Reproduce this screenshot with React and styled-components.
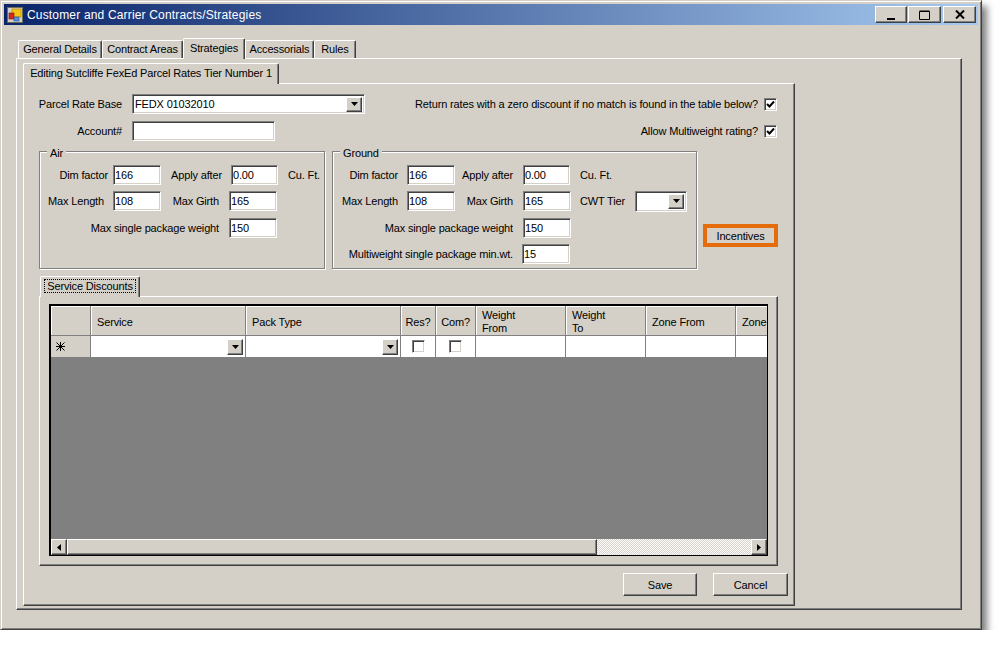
import styled, { createGlobalStyle } from 'styled-components';

const GlobalStyle = createGlobalStyle`
  html, body {
    margin: 0;
    background: #fff;
  }
  * {
    box-sizing: border-box;
  }
`;

const face = '#d4d0c8';
const columns = [40, 155, 155, 35, 40, 90, 80, 90, 90];

const Window = styled.div`
  display: flex;
  flex-direction: column;
  width: 982px;
  height: 630px;
  padding: 3px;
  background: ${face};
  border: 1px solid ${face};
  border-right-color: #404040;
  border-bottom-color: #404040;
  box-shadow: inset 1px 1px 0 #fff, inset -1px -1px 0 #808080, 5px 6px 7px rgba(0, 0, 0, 0.5);
  font-family: 'Liberation Sans', Arial, sans-serif;
  font-size: 11px;
  letter-spacing: -0.15px;
  color: #000;
`;

const TitleBar = styled.div`
  display: flex;
  align-items: center;
  flex: none;
  height: 21px;
  padding: 0 2px 0 3px;
  background: linear-gradient(90deg, #0a246a, #a6caf0);
`;

const TitleText = styled.span`
  margin-left: 4px;
  color: #fff;
  font-size: 12px;
  letter-spacing: 0.17px;
`;

const CaptionButtons = styled.div`
  display: flex;
  margin-left: auto;
`;

const CaptionButton = styled.button`
  display: flex;
  align-items: center;
  justify-content: center;
  width: ${(p) => p.$w}px;
  height: 17px;
  margin-left: ${(p) => p.$ml || 0}px;
  padding: 0;
  background: ${face};
  border: 1px solid;
  border-color: #fff #404040 #404040 #fff;
  box-shadow: inset -1px -1px 0 #808080;
`;

const TabStrip = styled.div`
  display: flex;
  align-items: flex-end;
  flex: none;
  height: ${(p) => p.$h}px;
  padding-left: ${(p) => p.$pl || 0}px;
`;

const Tab = styled.div`
  display: flex;
  align-items: center;
  justify-content: center;
  width: ${(p) => p.$w}px;
  height: ${(p) => (p.$active ? p.$h + 2 : p.$h)}px;
  margin-bottom: ${(p) => (p.$active ? -1 : 0)}px;
  padding-bottom: 2px;
  background: ${face};
  border: 1px solid;
  border-color: #fff #404040 transparent #fff;
  border-bottom: none;
  border-radius: 2px 2px 0 0;
  box-shadow: inset -1px 0 0 #808080;
  position: relative;
  z-index: ${(p) => (p.$active ? 1 : 0)};
`;

const FocusLabel = styled.span`
  padding: 1px 3px;
  outline: 1px dotted #000;
  outline-offset: -1px;
`;

const OuterPanel = styled.div`
  flex: none;
  width: 946px;
  height: 552px;
  padding: 4px 6px 0;
  border: 1px solid;
  border-color: #fff #404040 #404040 #fff;
  box-shadow: inset -1px -1px 0 #808080;
`;

const OuterArea = styled.div`
  margin: 13px 0 0 12px;
  display: flex;
  flex-direction: column;
`;

const InnerPanel = styled.div`
  width: 772px;
  height: 523px;
  padding-top: 10px;
  border: 1px solid;
  border-color: #fff #404040 #404040 #fff;
  box-shadow: inset -1px -1px 0 #808080;
`;

const Row = styled.div`
  display: flex;
  align-items: center;
  height: 20px;
  margin-top: ${(p) => p.$mt || 0}px;
`;

const Label = styled.span`
  flex: none;
  width: ${(p) => p.$w}px;
  margin-left: ${(p) => p.$ml || 0}px;
  text-align: ${(p) => p.$align || 'right'};
  white-space: nowrap;
`;

const Input = styled.input`
  flex: none;
  width: ${(p) => p.$w}px;
  height: 20px;
  margin: 0 0 0 ${(p) => p.$ml || 0}px;
  padding: 0 0 0 1px;
  background: #fff;
  border: 1px solid;
  border-color: #808080 #fff #fff #808080;
  box-shadow: inset 1px 1px 0 #404040, inset -1px -1px 0 ${face};
  border-radius: 0;
  outline: none;
  font: inherit;
  letter-spacing: inherit;
  color: #000;
`;

const Combo = styled.div`
  display: flex;
  align-items: center;
  flex: none;
  width: ${(p) => p.$w}px;
  height: ${(p) => p.$h || 20}px;
  margin-left: ${(p) => p.$ml || 0}px;
  padding: 2px 2px 2px 2px;
  background: #fff;
  border: 1px solid;
  border-color: #808080 #fff #fff #808080;
  box-shadow: inset 1px 1px 0 #404040, inset -1px -1px 0 ${face};
`;

const ComboText = styled.span`
  flex: 1;
`;

const DropButton = styled.div`
  display: flex;
  align-items: center;
  justify-content: center;
  flex: none;
  width: 16px;
  height: ${(p) => p.$h || 15}px;
  background: ${face};
  border: 1px solid;
  border-color: #fff #404040 #404040 #fff;
  box-shadow: inset -1px -1px 0 #808080;
`;

const CheckLabel = styled.span`
  margin-left: auto;
`;

const CheckBox = styled.span`
  display: flex;
  align-items: center;
  justify-content: center;
  flex: none;
  width: 13px;
  height: 13px;
  margin: ${(p) => p.$margin || '0'};
  background: #fff;
  border: 1px solid;
  border-color: #808080 #fff #fff #808080;
  box-shadow: inset 1px 1px 0 #404040, inset -1px -1px 0 ${face};
`;

const Groups = styled.div`
  display: flex;
  align-items: flex-start;
  margin: 10px 0 0 15px;
`;

const Group = styled.div`
  position: relative;
  width: ${(p) => p.$w}px;
  height: 118px;
  margin-right: ${(p) => p.$mr || 0}px;
  padding-top: 13px;
  border: 1px solid #808080;
  box-shadow: 1px 1px 0 #fff, inset 1px 1px 0 #fff;
`;

const Legend = styled.span`
  position: absolute;
  top: -5px;
  left: 7px;
  padding: 0 3px;
  background: ${face};
`;

const IncentivesButton = styled.button`
  flex: none;
  width: 75px;
  height: 23px;
  margin-top: 73px;
  padding: 0;
  background: ${face};
  border: 4px solid #e46c0a;
  font: inherit;
  letter-spacing: inherit;
  color: #000;
`;

const ServiceArea = styled.div`
  display: flex;
  flex-direction: column;
  margin: 8px 0 0 15px;
`;

const ServicePanel = styled.div`
  width: 739px;
  height: 270px;
  padding: 7px 0 0 9px;
  border: 1px solid;
  border-color: #fff #404040 #404040 #fff;
  box-shadow: inset -1px -1px 0 #808080;
`;

const DataGrid = styled.div`
  display: flex;
  flex-direction: column;
  width: 719px;
  height: 252px;
  background: #808080;
  border: 2px solid #000;
  border-right-width: 1px;
  border-bottom-width: 1px;
  overflow: hidden;
`;

const GridRow = styled.div`
  display: grid;
  grid-template-columns: ${columns.map((c) => `${c}px`).join(' ')};
  flex: none;
  width: 775px;
  height: ${(p) => p.$h}px;
`;

const HeaderCell = styled.div`
  display: flex;
  align-items: center;
  padding: 3px ${(p) => (p.$center ? 0 : 6)}px 0;
  justify-content: ${(p) => (p.$center ? 'center' : 'flex-start')};
  line-height: 13px;
  background: ${face};
  border-right: 1px solid #808080;
  border-bottom: 1px solid #808080;
  box-shadow: inset 1px 1px 0 #fff;
  white-space: pre-line;
`;

const BodyCell = styled.div`
  display: flex;
  align-items: center;
  justify-content: ${(p) => p.$justify || 'flex-end'};
  padding: 0 ${(p) => (p.$justify ? 0 : 2)}px 0 ${(p) => p.$pl || 0}px;
  background: ${(p) => (p.$head ? face : '#fff')};
  border-right: 1px solid #808080;
  border-bottom: 1px solid #808080;
`;

const GrayArea = styled.div`
  flex: 1;
`;

const ScrollBar = styled.div`
  display: flex;
  flex: none;
  height: 16px;
  background: repeating-conic-gradient(${face} 0 25%, #fff 0 50%) 0 0 / 2px 2px;
`;

const ScrollButton = styled.div`
  display: flex;
  align-items: center;
  justify-content: center;
  flex: none;
  width: 16px;
  background: ${face};
  border: 1px solid;
  border-color: #fff #404040 #404040 #fff;
  box-shadow: inset -1px -1px 0 #808080;
  margin-left: ${(p) => (p.$end ? 'auto' : 0)};
`;

const ScrollThumb = styled.div`
  flex: none;
  width: 530px;
  background: ${face};
  border: 1px solid;
  border-color: #fff #404040 #404040 #fff;
  box-shadow: inset -1px -1px 0 #808080;
`;

const Actions = styled.div`
  display: flex;
  justify-content: flex-end;
  gap: 16px;
  margin: 7px 6px 0 0;
`;

const ActionButton = styled.button`
  width: ${(p) => p.$w}px;
  height: 23px;
  padding: 0;
  background: ${face};
  border: 1px solid;
  border-color: #fff #404040 #404040 #fff;
  box-shadow: inset -1px -1px 0 #808080;
  font: inherit;
  letter-spacing: inherit;
  color: #000;
`;

const AppIcon = () => (
  <svg width="16" height="16" viewBox="0 0 16 16">
    <rect x="0.5" y="0.5" width="15" height="15" fill="#d4d0c8" stroke="#6b6b5a" />
    <rect x="5" y="2" width="9" height="8" fill="#f5c518" stroke="#a87a00" strokeWidth="0.6" />
    <rect x="2" y="6" width="5" height="6" fill="#d8281c" stroke="#7a1208" strokeWidth="0.6" />
    <rect x="7" y="10" width="5" height="4" fill="#5b8fe0" stroke="#24508f" strokeWidth="0.6" />
  </svg>
);

const Arrow = ({ dir = 'down' }) => {
  const points = {
    down: '0,0 7,0 3.5,4',
    left: '4,0 4,7 0,3.5',
    right: '0,0 0,7 4,3.5',
  };
  const size = dir === 'down' ? [7, 4] : [4, 7];
  return (
    <svg width={size[0]} height={size[1]} viewBox={`0 0 ${size[0]} ${size[1]}`}>
      <polygon points={points[dir]} fill="#000" />
    </svg>
  );
};

const Check = () => (
  <svg width="9" height="9" viewBox="0 0 9 9">
    <path d="M1 4 L3.5 6.5 L8 1.5" fill="none" stroke="#000" strokeWidth="2" />
  </svg>
);

const NewRowStar = () => (
  <svg width="11" height="11" viewBox="0 0 11 11">
    <path d="M5.5 1V10M1.5 1.5L9.5 9.5M9.5 1.5L1.5 9.5M1 5.5H10" stroke="#000" strokeWidth="1" fill="none" />
  </svg>
);

const headers = [
  ['', false],
  ['Service', false],
  ['Pack Type', false],
  ['Res?', true],
  ['Com?', true],
  ['Weight\nFrom', false],
  ['Weight\nTo', false],
  ['Zone From', false],
  ['Zone', false],
];

function App() {
  return (
    <>
      <GlobalStyle />
      <Window>
        <TitleBar>
          <AppIcon />
          <TitleText>Customer and Carrier Contracts/Strategies</TitleText>
          <CaptionButtons>
            <CaptionButton $w={32}>
              <svg width="8" height="10" viewBox="0 0 8 10"><rect y="8" width="8" height="2" fill="#000" /></svg>
            </CaptionButton>
            <CaptionButton $w={33} $ml={1}>
              <svg width="11" height="10" viewBox="0 0 11 10"><path d="M0.5 1.5H10.5V9.5H0.5Z M0.5 1H10.5" fill="none" stroke="#000" /></svg>
            </CaptionButton>
            <CaptionButton $w={33} $ml={2}>
              <svg width="10" height="9" viewBox="0 0 10 9"><path d="M1 0.5L9 8.5M9 0.5L1 8.5" stroke="#000" strokeWidth="2" /></svg>
            </CaptionButton>
          </CaptionButtons>
        </TitleBar>

        <OuterArea>
          <TabStrip $h={20} $pl={2}>
            <Tab $w={84} $h={18}>General Details</Tab>
            <Tab $w={81} $h={18}>Contract Areas</Tab>
            <Tab $w={62} $h={19} $active>Strategies</Tab>
            <Tab $w={69} $h={18}>Accessorials</Tab>
            <Tab $w={42} $h={18}>Rules</Tab>
          </TabStrip>
          <OuterPanel>
            <TabStrip $h={20}>
              <Tab $w={256} $h={19} $active>Editing Sutcliffe FexEd Parcel Rates Tier Number 1</Tab>
            </TabStrip>
            <InnerPanel>
              <Row>
                <Label $w={98}>Parcel Rate Base</Label>
                <Combo $w={233} $ml={10}>
                  <ComboText>FEDX 01032010</ComboText>
                  <DropButton><Arrow /></DropButton>
                </Combo>
                <CheckLabel>Return rates with a zero discount if no match is found in the table below?</CheckLabel>
                <CheckBox $margin="0 17px 0 6px"><Check /></CheckBox>
              </Row>
              <Row $mt={7}>
                <Label $w={98}>Account#</Label>
                <Input $w={143} $ml={10} readOnly />
                <CheckLabel>Allow Multiweight rating?</CheckLabel>
                <CheckBox $margin="0 17px 0 6px"><Check /></CheckBox>
              </Row>

              <Groups>
                <Group $w={286} $mr={7}>
                  <Legend>Air</Legend>
                  <Row>
                    <Label $w={68}>Dim factor</Label>
                    <Input $w={48} $ml={5} readOnly value="166" />
                    <Label $w={61}>Apply after</Label>
                    <Input $w={47} $ml={9} readOnly value="0.00" />
                    <Label $w={32} $ml={10}>Cu. Ft.</Label>
                  </Row>
                  <Row $mt={6}>
                    <Label $w={64}>Max Length</Label>
                    <Input $w={48} $ml={9} readOnly value="108" />
                    <Label $w={58}>Max Girth</Label>
                    <Input $w={48} $ml={10} readOnly value="165" />
                  </Row>
                  <Row $mt={7}>
                    <Label $w={179}>Max single package weight</Label>
                    <Input $w={48} $ml={10} readOnly value="150" />
                  </Row>
                </Group>

                <Group $w={365} $mr={6}>
                  <Legend>Ground</Legend>
                  <Row>
                    <Label $w={65}>Dim factor</Label>
                    <Input $w={48} $ml={9} readOnly value="166" />
                    <Label $w={58}>Apply after</Label>
                    <Input $w={47} $ml={10} readOnly value="0.00" />
                    <Label $w={32} $ml={10}>Cu. Ft.</Label>
                  </Row>
                  <Row $mt={6}>
                    <Label $w={65}>Max Length</Label>
                    <Input $w={48} $ml={9} readOnly value="108" />
                    <Label $w={58}>Max Girth</Label>
                    <Input $w={48} $ml={10} readOnly value="165" />
                    <Label $w={46} $ml={9} $align="left">CWT Tier</Label>
                    <Combo $w={52} $h={21} $ml={9}>
                      <ComboText />
                      <DropButton><Arrow /></DropButton>
                    </Combo>
                  </Row>
                  <Row $mt={7}>
                    <Label $w={180}>Max single package weight</Label>
                    <Input $w={48} $ml={10} readOnly value="150" />
                  </Row>
                  <Row $mt={6}>
                    <Label $w={180}>Multiweight single package min.wt.</Label>
                    <Input $w={48} $ml={9} readOnly value="15" />
                  </Row>
                </Group>

                <IncentivesButton>Incentives</IncentivesButton>
              </Groups>

              <ServiceArea>
                <TabStrip $h={19} $pl={1}>
                  <Tab $w={100} $h={19} $active><FocusLabel>Service Discounts</FocusLabel></Tab>
                </TabStrip>
                <ServicePanel>
                  <DataGrid>
                    <GridRow $h={30}>
                      {headers.map(([text, center], i) => (
                        <HeaderCell key={i} $center={center}>{text}</HeaderCell>
                      ))}
                    </GridRow>
                    <GridRow $h={22}>
                      <BodyCell $head $justify="flex-start" $pl={4}><NewRowStar /></BodyCell>
                      <BodyCell><DropButton $h={16}><Arrow /></DropButton></BodyCell>
                      <BodyCell><DropButton $h={16}><Arrow /></DropButton></BodyCell>
                      <BodyCell $justify="center"><CheckBox /></BodyCell>
                      <BodyCell $justify="center"><CheckBox /></BodyCell>
                      <BodyCell />
                      <BodyCell />
                      <BodyCell />
                      <BodyCell />
                    </GridRow>
                    <GrayArea />
                    <ScrollBar>
                      <ScrollButton><Arrow dir="left" /></ScrollButton>
                      <ScrollThumb />
                      <ScrollButton $end><Arrow dir="right" /></ScrollButton>
                    </ScrollBar>
                  </DataGrid>
                </ServicePanel>
              </ServiceArea>

              <Actions>
                <ActionButton $w={74}>Save</ActionButton>
                <ActionButton $w={75}>Cancel</ActionButton>
              </Actions>
            </InnerPanel>
          </OuterPanel>
        </OuterArea>
      </Window>
    </>
  );
}

export default App;
